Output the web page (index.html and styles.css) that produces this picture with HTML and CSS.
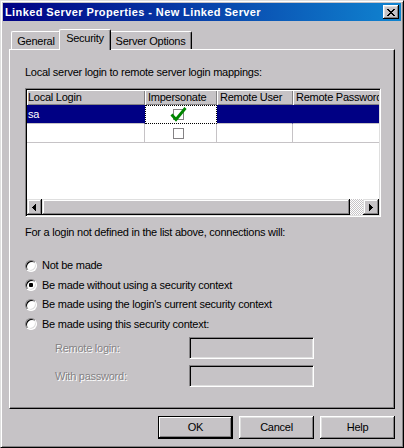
FILE: index.html
```html
<!DOCTYPE html>
<html>
<head>
<meta charset="utf-8">
<title>Linked Server Properties</title>
<link rel="stylesheet" href="styles.css">
</head>
<body>
<div class="window">
  <div class="titlebar">
    <span class="title">Linked Server Properties - New Linked Server</span>
    <div class="close"><svg width="8" height="7" viewBox="0 0 8 7" shape-rendering="crispEdges"><path d="M0 0h2v1H0z M6 0h2v1H6z M1 1h2v1H1z M5 1h2v1H5z M2 2h4v1H2z M3 3h2v1H3z M2 4h4v1H2z M1 5h2v1H1z M5 5h2v1H5z M0 6h2v1H0z M6 6h2v1H6z" fill="#000"/></svg></div>
  </div>
  <div class="content">
    <div class="tabs">
      <div class="tab tab-general">General</div>
      <div class="tab tab-security">Security</div>
      <div class="tab tab-options">Server Options</div>
    </div>
    <div class="panel">
      <div class="label">Local server login to remote server login mappings:</div>
      <div class="grid">
        <div class="grid-view">
          <div class="grid-row header">
            <div class="cell c1">Local Login</div>
            <div class="cell c2">Impersonate</div>
            <div class="cell c3">Remote User</div>
            <div class="cell c4">Remote Password</div>
          </div>
          <div class="grid-row selected">
            <div class="cell c1">sa</div>
            <div class="cell c2 focus">
              <span class="check"></span>
              <svg class="tick" width="18" height="16" viewBox="0 0 18 16"><path d="M1.5 8.5 L6 13.5 L15.5 2" fill="none" stroke="#008600" stroke-width="2.8"/></svg>
            </div>
            <div class="cell c3"></div>
            <div class="cell c4"></div>
          </div>
          <div class="grid-row">
            <div class="cell c1"></div>
            <div class="cell c2"><span class="check"></span></div>
            <div class="cell c3"></div>
            <div class="cell c4"></div>
          </div>
        </div>
        <div class="hscroll">
          <div class="sb-btn sb-left"><svg width="4" height="7" viewBox="0 0 4 7" shape-rendering="crispEdges"><path d="M3 0h1v7h-1z M2 1h1v5h-1z M1 2h1v3h-1z M0 3h1v1h-1z" fill="#000"/></svg></div>
          <div class="sb-thumb"></div>
          <div class="sb-track"></div>
          <div class="sb-btn sb-right"><svg width="4" height="7" viewBox="0 0 4 7" shape-rendering="crispEdges"><path d="M0 0h1v7H0z M1 1h1v5H1z M2 2h1v3H2z M3 3h1v1H3z" fill="#000"/></svg></div>
        </div>
      </div>
      <div class="label label2">For a login not defined in the list above, connections will:</div>
      <div class="radios">
        <div class="radio-row"><span class="radio"></span><span>Not be made</span></div>
        <div class="radio-row"><span class="radio checked"></span><span>Be made without using a security context</span></div>
        <div class="radio-row"><span class="radio"></span><span>Be made using the login's current security context</span></div>
        <div class="radio-row"><span class="radio"></span><span>Be made using this security context:</span></div>
      </div>
      <div class="fields">
        <div class="field-row"><span class="field-label">Remote login:</span><span class="field-box"></span></div>
        <div class="field-row"><span class="field-label">With password:</span><span class="field-box"></span></div>
      </div>
    </div>
    <div class="buttons">
      <div class="btn btn-default">OK</div>
      <div class="btn">Cancel</div>
      <div class="btn">Help</div>
    </div>
  </div>
</div>
</body>
</html>
```
FILE: styles.css
```css
* { box-sizing: border-box; }
html, body { margin: 0; padding: 0; }
body {
  width: 404px;
  height: 448px;
  overflow: hidden;
  background: #c6c3c6;
  font-family: "Liberation Sans", Arial, sans-serif;
  font-size: 11px;
  letter-spacing: -0.25px;
  line-height: 13px;
  color: #000;
}
.window {
  width: 404px;
  height: 448px;
  background: #c6c3c6;
  border: 1px solid;
  border-color: #dfdfdf #000 #000 #dfdfdf;
  box-shadow: inset 1px 1px #fff, inset -1px -1px #848284;
  padding: 2px;
  display: flex;
  flex-direction: column;
}
.titlebar {
  height: 18px;
  flex: none;
  background: linear-gradient(to right, #000084, #1084d0);
  display: flex;
  align-items: center;
  justify-content: space-between;
  padding: 0 2px 0 2px;
}
.title {
  color: #fff;
  font-weight: bold;
  letter-spacing: 0.4px;
  line-height: 18px;
  white-space: nowrap;
}
.close {
  width: 16px;
  height: 14px;
  background: #c6c3c6;
  box-shadow: inset -1px -1px #000, inset 1px 1px #fff, inset -2px -2px #848284, inset 2px 2px #dfdfdf;
  display: flex;
  align-items: center;
  justify-content: center;
  padding-left: 0;
}
.close svg { display: block; margin-left: -1px; }

.content {
  flex: 1;
  display: flex;
  flex-direction: column;
  padding: 8px 6px 0 6px;
}
.tabs {
  height: 20px;
  flex: none;
  display: flex;
  align-items: flex-end;
  padding-left: 2px;
}
.tab {
  height: 18px;
  border-top: 1px solid #fff;
  border-left: 1px solid #fff;
  border-right: 1px solid #000;
  box-shadow: inset -1px 0 #848284;
  border-radius: 2px 2px 0 0;
  padding-top: 3px;
  text-align: center;
  white-space: nowrap;
  background: #c6c3c6;
  flex: none;
}
.tab-general { width: 50px; }
.tab-security {
  width: 52px;
  height: 21px;
  margin: 0 -2px -1px -2px;
  padding-top: 2px;
  position: relative;
  z-index: 1;
}
.tab-options { width: 83px; }

.panel {
  height: 360px;
  flex: none;
  border: 1px solid;
  border-color: #fff #000 #000 #fff;
  box-shadow: inset -1px -1px #848284;
  padding: 16px 0 0 15px;
  display: flex;
  flex-direction: column;
}
.label { white-space: nowrap; }
.label2 { margin-top: 9px; }

.grid {
  margin-top: 9px;
  width: 356px;
  height: 129px;
  flex: none;
  border: 1px solid;
  border-color: #848284 #fff #fff #848284;
  box-shadow: inset 1px 1px #000, inset -1px -1px #dfdfdf;
  padding: 1px;
  background: #fff;
  display: flex;
  flex-direction: column;
}
.grid-view {
  flex: 1;
  overflow: hidden;
  background: #fff;
}
.grid-row {
  display: flex;
  height: 19px;
  width: 352px;
  overflow: hidden;
}
.cell {
  flex: none;
  height: 19px;
  border-right: 1px solid #c6c3c6;
  border-bottom: 1px solid #c6c3c6;
  white-space: nowrap;
  overflow: hidden;
  padding: 3px 0 0 1px;
}
.c1 { width: 118px; }
.c2 { width: 72px; padding: 4px 0 0 28px; position: relative; }
.c3 { width: 76px; }
.c4 { width: 100px; }

.header { height: 15px; }
.header .cell {
  height: 15px;
  background: #c6c3c6;
  border: none;
  box-shadow: inset 1px 1px #fff, inset -1px -1px #848284;
  padding: 0 0 0 3px;
  line-height: 14px;
}
.header .c1 { padding-left: 1px; }

.selected .cell {
  background: #000084;
  color: #fff;
  border-right-color: #000084;
}
.selected .c1 { padding-top: 3px; }
.selected .focus {
  background: #fff;
  border: 1px dotted #000;
  padding: 3px 0 0 27px;
}
.check {
  display: block;
  width: 11px;
  height: 11px;
  border: 1px solid #848284;
  background: #fff;
}
.tick {
  position: absolute;
  left: 24px;
  top: 0;
}

.hscroll {
  height: 16px;
  flex: none;
  display: flex;
  background: #c6c3c6;
}
.sb-btn, .sb-thumb {
  background: #c6c3c6;
  box-shadow: inset -1px -1px #000, inset 1px 1px #dfdfdf, inset -2px -2px #848284, inset 2px 2px #fff;
}
.sb-btn {
  display: flex;
  align-items: center;
  justify-content: center;
  flex: none;
}
.sb-btn svg { display: block; }
.sb-left { width: 15px; padding-right: 1px; }
.sb-right { width: 16px; padding-right: 1px; }
.sb-thumb { width: 308px; flex: none; }
.sb-track {
  flex: 1;
  background: repeating-conic-gradient(#c6c3c6 0 25%, #fff 0 50%) 0 0 / 2px 2px;
}

.radios {
  margin-top: 17px;
  display: flex;
  flex-direction: column;
}
.radio-row {
  height: 19.5px;
  display: flex;
  align-items: center;
  gap: 5px;
  white-space: nowrap;
}
.radio {
  width: 12px;
  height: 12px;
  flex: none;
  border-radius: 50%;
  background: #fff;
  border: 1px solid;
  border-color: #848284 #fff #fff #848284;
  box-shadow: inset 1px 1px #000, inset -1px -1px #dfdfdf;
  position: relative;
}
.radio.checked::after {
  content: "";
  position: absolute;
  left: 3px;
  top: 3px;
  width: 4px;
  height: 4px;
  border-radius: 1px;
  background: #000;
}

.fields {
  margin-top: 3px;
  display: flex;
  flex-direction: column;
  gap: 6px;
}
.field-row {
  height: 22px;
  display: flex;
  align-items: center;
  padding-left: 30px;
}
.field-label {
  width: 134px;
  color: #848284;
  text-shadow: 1px 1px 0 #fff;
  white-space: nowrap;
}
.field-box {
  width: 125px;
  height: 22px;
  border: 1px solid;
  border-color: #848284 #fff #fff #848284;
  box-shadow: inset 1px 1px #000, inset -1px -1px #dfdfdf;
  background: #c6c3c6;
}

.buttons {
  margin-top: 7px;
  display: flex;
  justify-content: flex-end;
  gap: 6px;
}
.btn {
  width: 75px;
  height: 23px;
  background: #c6c3c6;
  box-shadow: inset -1px -1px #000, inset 1px 1px #fff, inset -2px -2px #848284, inset 2px 2px #dfdfdf;
  display: flex;
  align-items: center;
  justify-content: center;
  padding-bottom: 1px;
}
.btn-default {
  border: 1px solid #000;
  box-shadow: inset -1px -1px #000, inset 1px 1px #fff, inset -2px -2px #848284;
}
```
